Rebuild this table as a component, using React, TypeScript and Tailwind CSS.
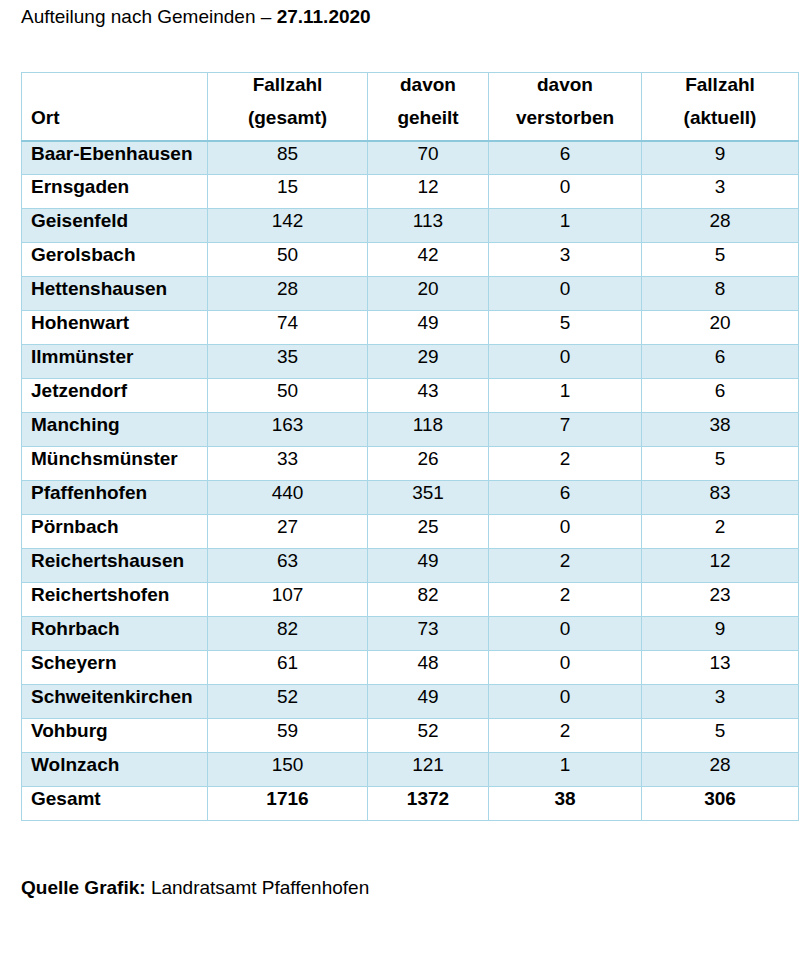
const rows: [string, number, number, number, number][] = [
  ["Baar-Ebenhausen", 85, 70, 6, 9],
  ["Ernsgaden", 15, 12, 0, 3],
  ["Geisenfeld", 142, 113, 1, 28],
  ["Gerolsbach", 50, 42, 3, 5],
  ["Hettenshausen", 28, 20, 0, 8],
  ["Hohenwart", 74, 49, 5, 20],
  ["Ilmmünster", 35, 29, 0, 6],
  ["Jetzendorf", 50, 43, 1, 6],
  ["Manching", 163, 118, 7, 38],
  ["Münchsmünster", 33, 26, 2, 5],
  ["Pfaffenhofen", 440, 351, 6, 83],
  ["Pörnbach", 27, 25, 0, 2],
  ["Reichertshausen", 63, 49, 2, 12],
  ["Reichertshofen", 107, 82, 2, 23],
  ["Rohrbach", 82, 73, 0, 9],
  ["Scheyern", 61, 48, 0, 13],
  ["Schweitenkirchen", 52, 49, 0, 3],
  ["Vohburg", 59, 52, 2, 5],
  ["Wolnzach", 150, 121, 1, 28],
];

function Head({ top, bottom }: { top: string; bottom: string }) {
  return (
    <th className="border-r border-[#a7d6e6] text-center align-top font-bold last:border-r-0">
      <div className="leading-[24px]">{top}</div>
      <div className="leading-[24px] mt-[9px]">{bottom}</div>
    </th>
  );
}

export default function App() {
  return (
    <div className="w-[800px] h-[970px] bg-white text-black font-['Liberation_Sans',Arial,sans-serif] text-[19px]">
      <p className="pl-[21px] pt-[5px] h-[72px] leading-[24px]">
        Aufteilung nach Gemeinden – <span className="font-bold">27.11.2020</span>
      </p>
      <table className="ml-[21px] border-collapse border border-[#a7d6e6] table-fixed w-[777px]">
        <colgroup>
          <col className="w-[186px]" />
          <col className="w-[160px]" />
          <col className="w-[121px]" />
          <col className="w-[153px]" />
          <col className="w-[157px]" />
        </colgroup>
        <thead>
          <tr className="h-[68px] border-b-2 border-[#8ec8dc]">
            <th className="border-r border-[#a7d6e6] text-left align-top px-[9px] font-bold">
              <div className="leading-[24px] pt-[33px]">Ort</div>
            </th>
            <Head top="Fallzahl" bottom="(gesamt)" />
            <Head top="davon" bottom="geheilt" />
            <Head top="davon" bottom="verstorben" />
            <Head top="Fallzahl" bottom="(aktuell)" />
          </tr>
        </thead>
        <tbody>
          {rows.map((r, i) => (
            <tr
              key={r[0]}
              className={`h-[34px] border-b border-[#a7d6e6] leading-[24px] ${i % 2 === 0 ? "bg-[#daecf3]" : "bg-white"}`}
            >
              <td className="border-r border-[#a7d6e6] px-[9px] align-top font-bold">{r[0]}</td>
              <td className="border-r border-[#a7d6e6] text-center align-top">{r[1]}</td>
              <td className="border-r border-[#a7d6e6] text-center align-top">{r[2]}</td>
              <td className="border-r border-[#a7d6e6] text-center align-top">{r[3]}</td>
              <td className="text-center align-top">{r[4]}</td>
            </tr>
          ))}
          <tr className="h-[34px] font-bold leading-[24px]">
            <td className="border-r border-[#a7d6e6] px-[9px] align-top">Gesamt</td>
            <td className="border-r border-[#a7d6e6] text-center align-top">1716</td>
            <td className="border-r border-[#a7d6e6] text-center align-top">1372</td>
            <td className="border-r border-[#a7d6e6] text-center align-top">38</td>
            <td className="text-center align-top">306</td>
          </tr>
        </tbody>
      </table>
      <p className="pl-[21px] mt-[55px] leading-[24px]">
        <span className="font-bold">Quelle Grafik:</span> Landratsamt Pfaffenhofen
      </p>
    </div>
  );
}
